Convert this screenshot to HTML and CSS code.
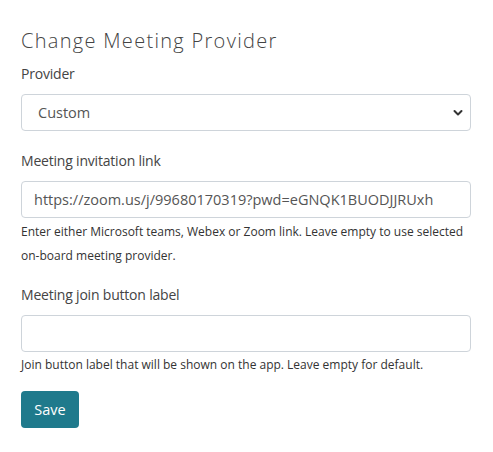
FILE: index.html
```html
<!DOCTYPE html>
<html>
<head>
<meta charset="utf-8">
<link rel="stylesheet" href="styles.css">
</head>
<body>
<form class="panel">
  <h1 class="title">Change Meeting Provider</h1>
  <div class="field">
    <label class="label">Provider</label>
    <div class="select">
      <span class="select-value">Custom</span>
      <svg class="chevron" width="12" height="8" viewBox="0 0 12 8"><path d="M2.5 2l3.5 3.5 3.5-3.5" fill="none" stroke="#333" stroke-width="2" stroke-linecap="round" stroke-linejoin="round"/></svg>
    </div>
  </div>
  <div class="field">
    <label class="label">Meeting invitation link</label>
    <div class="input"><span class="input-value">https://zoom.us/j/99680170319?pwd=eGNQK1BUODJJRUxh</span></div>
    <p class="help">Enter either Microsoft teams, Webex or Zoom link. Leave empty to use selected on-board meeting provider.</p>
  </div>
  <div class="field">
    <label class="label">Meeting join button label</label>
    <div class="input"></div>
    <p class="help help-last">Join button label that will be shown on the app. Leave empty for default.</p>
  </div>
  <button type="button" class="btn">Save</button>
</form>
</body>
</html>
```
FILE: styles.css
```css
html, body {
  margin: 0;
  padding: 0;
  background: #ffffff;
}
.panel {
  width: 450px;
  padding: 29px 22px 0 21px;
  font-family: "Open Sans", "Noto Sans", sans-serif;
  color: #333;
}
.title {
  margin: 0 0 11px;
  font-weight: 300;
  font-size: 20px;
  line-height: 24px;
  color: #444;
  letter-spacing: 1.3px;
}
.field {
  display: flex;
  flex-direction: column;
}
.label {
  font-size: 14px;
  line-height: 20px;
  color: #444;
  letter-spacing: -0.2px;
  margin-bottom: 10px;
}
.select, .input {
  box-sizing: border-box;
  height: 37px;
  border: 1px solid #ced4da;
  border-radius: 4px;
  display: flex;
  align-items: center;
  padding: 0 12px;
  font-size: 14.5px;
  color: #555;
}
.select {
  justify-content: space-between;
  padding-left: 16px;
  padding-right: 6px;
  margin-bottom: 20px;
}
.input-value {
  white-space: nowrap;
  overflow: hidden;
}
.help {
  margin: 2px 0 17px;
  font-size: 12px;
  line-height: 24px;
  color: #333;
}
.help-last {
  margin: 1px 0 14px;
}
.btn {
  display: block;
  width: 58px;
  height: 37px;
  border: none;
  border-radius: 4px;
  background: #1f7a8c;
  color: #fff;
  font-family: "Open Sans", "Noto Sans", sans-serif;
  font-size: 14.5px;
  padding: 0;
  margin: 0;
}
```
